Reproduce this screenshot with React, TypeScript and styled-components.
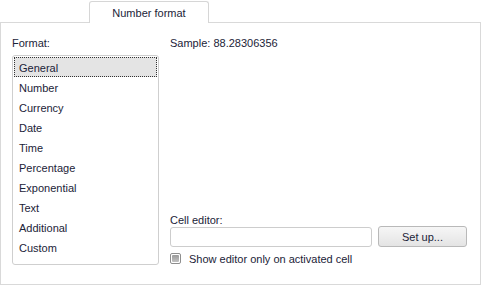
import styled, { createGlobalStyle } from "styled-components";

const GlobalStyle = createGlobalStyle`
  html, body {
    margin: 0;
    padding: 0;
    background: #ffffff;
  }
  body {
    font-family: Tahoma, "Liberation Sans", Arial, sans-serif;
    font-size: 11px;
    color: #1b2338;
  }
`;

const formats = [
  "General",
  "Number",
  "Currency",
  "Date",
  "Time",
  "Percentage",
  "Exponential",
  "Text",
  "Additional",
  "Custom",
];

const Window = styled.div`
  width: 481px;
  height: 286px;
  box-sizing: border-box;
  display: flex;
  flex-direction: column;
  background: #fff;
`;

const TabStrip = styled.div`
  height: 23px;
  display: flex;
  align-items: flex-end;
  padding-left: 89px;
`;

const Tab = styled.div`
  position: relative;
  z-index: 1;
  width: 120px;
  height: 22px;
  box-sizing: border-box;
  margin-bottom: -1px;
  border: 1px solid #d6d6d6;
  border-bottom: none;
  border-radius: 3px 3px 0 0;
  background: #fff;
  display: flex;
  align-items: center;
  justify-content: center;
`;

const Panel = styled.div`
  flex: 1;
  box-sizing: border-box;
  border: 1px solid #d9d9d9;
  margin-bottom: 1px;
  display: grid;
  grid-template-columns: 147px 1fr;
  column-gap: 11px;
  padding: 13px 12px 19px 11px;
`;

const Column = styled.div`
  display: flex;
  flex-direction: column;
`;

const Label = styled.div`
  line-height: 14px;
  height: 14px;
`;

const ListBox = styled.div`
  margin-top: 5px;
  height: 210px;
  box-sizing: border-box;
  border: 1px solid #cfcfcf;
  border-radius: 3px;
  padding: 1px;
`;

const Item = styled.div<{ $selected?: boolean }>`
  height: 20px;
  box-sizing: border-box;
  line-height: 20px;
  padding-left: 4px;
  border: 1px dotted ${(p) => (p.$selected ? "#333" : "transparent")};
  background: ${(p) => (p.$selected ? "#e4e4e4" : "transparent")};
`;

const Spacer = styled.div`
  flex: 1;
`;

const EditorRow = styled.div`
  display: flex;
  gap: 6px;
  margin-top: 0;
`;

const Input = styled.div`
  width: 202px;
  height: 20px;
  box-sizing: border-box;
  border: 1px solid #cdcdcd;
  border-radius: 3px;
  background: #fff;
`;

const Button = styled.div`
  width: 89px;
  height: 21px;
  margin-top: -1px;
  box-sizing: border-box;
  border: 1px solid #b9b9b9;
  border-radius: 3px;
  background: linear-gradient(#f6f6f6, #e4e4e4);
  display: flex;
  align-items: center;
  justify-content: center;
`;

const CheckRow = styled.div`
  display: flex;
  align-items: center;
  gap: 8px;
  margin-top: 5px;
  height: 13px;
`;

const Box = styled.div`
  width: 11px;
  height: 11px;
  box-sizing: border-box;
  border: 1px solid #8e8e8e;
  border-radius: 2px;
  background: #fff;
  display: flex;
  align-items: center;
  justify-content: center;
  &::after {
    content: "";
    width: 7px;
    height: 7px;
    border-radius: 1px;
    background: linear-gradient(#9a9a9a, #c2c2c2);
  }
`;

export default function App() {
  return (
    <>
      <GlobalStyle />
      <Window>
        <TabStrip>
          <Tab>Number format</Tab>
        </TabStrip>
        <Panel>
          <Column>
            <Label>Format:</Label>
            <ListBox>
              {formats.map((f, i) => (
                <Item key={f} $selected={i === 0}>
                  {f}
                </Item>
              ))}
            </ListBox>
          </Column>
          <Column>
            <Label>Sample: 88.28306356</Label>
            <Spacer />
            <Label>Cell editor:</Label>
            <EditorRow>
              <Input />
              <Button>Set up...</Button>
            </EditorRow>
            <CheckRow>
              <Box />
              <span>Show editor only on activated cell</span>
            </CheckRow>
          </Column>
        </Panel>
      </Window>
    </>
  );
}
